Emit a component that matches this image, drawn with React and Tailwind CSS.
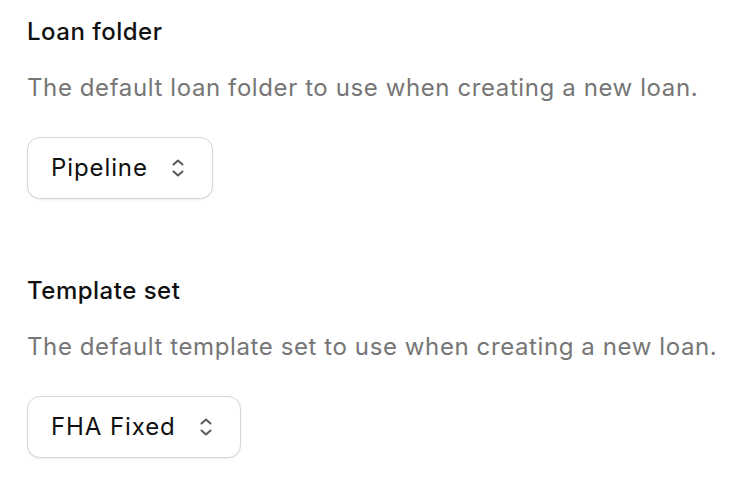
import React from 'react';

const Chevrons = () => (
  <svg width="14" height="20" viewBox="0 0 14 20" fill="none" className="text-[#5a5a5a]">
    <path d="M2.5 6.5 L7 2.5 L11.5 6.5" stroke="currentColor" strokeWidth="2" strokeLinecap="round" strokeLinejoin="round" />
    <path d="M2.5 13.5 L7 17.5 L11.5 13.5" stroke="currentColor" strokeWidth="2" strokeLinecap="round" strokeLinejoin="round" />
  </svg>
);

const SelectButton = ({ label }) => (
  <button className="flex items-center gap-[23px] h-[62px] pl-[23px] pr-[27px] bg-white border border-[#d6d6d6] rounded-[13px] shadow-[0_1px_2px_rgba(0,0,0,0.08)] text-[24px] leading-none tracking-[0.9px] text-[#111]">
    <span>{label}</span>
    <Chevrons />
  </button>
);

const Setting = ({ title, description, value }) => (
  <section className="flex flex-col items-start">
    <h2 className="text-[24px] leading-[32px] font-medium tracking-[0.5px] text-[#111] whitespace-nowrap">{title}</h2>
    <p className="mt-[24px] text-[24px] leading-[32px] tracking-[0.6px] text-[#767676] whitespace-nowrap">{description}</p>
    <div className="mt-[33px]">
      <SelectButton label={value} />
    </div>
  </section>
);

export default function App() {
  return (
    <div className="w-[740px] h-[478px] bg-white px-[27px] pt-[16px] font-['Inter',sans-serif] antialiased overflow-hidden">
      <div className="flex flex-col gap-[76px]">
        <Setting
          title="Loan folder"
          description="The default loan folder to use when creating a new loan."
          value="Pipeline"
        />
        <Setting
          title="Template set"
          description="The default template set to use when creating a new loan."
          value="FHA Fixed"
        />
      </div>
    </div>
  );
}
